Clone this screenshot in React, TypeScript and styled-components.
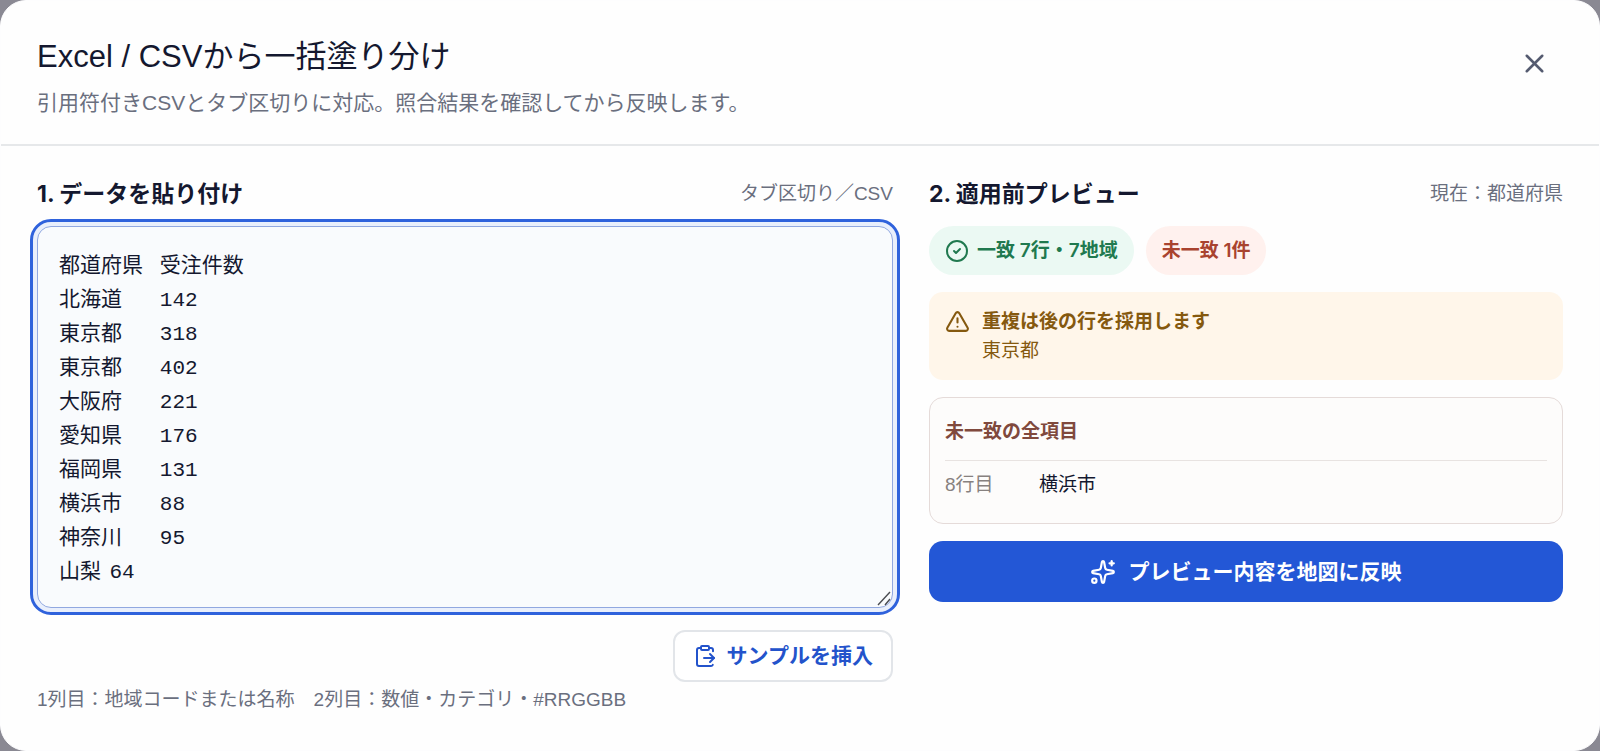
import React, { useState } from "react";
import styled, { createGlobalStyle } from "styled-components";
import { CircleCheck, ClipboardPaste, Sparkles, TriangleAlert, X } from "lucide-react";

const labelFont = 'Inter, "Noto Sans CJK JP", sans-serif';

const GlobalStyle = createGlobalStyle`
  *, *::before, *::after { box-sizing: border-box; }
  body {
    margin: 0;
    background: #8a8993;
    color: #14182f;
    font-family: "Liberation Sans", "Noto Sans CJK JP", sans-serif;
    font-size: 19px;
    line-height: 28px;
  }
  h2, h3, h4, p, ul { margin: 0; padding: 0; }
  button { font: inherit; cursor: pointer; }
`;

const Dialog = styled.section`
  display: flex;
  flex-direction: column;
  min-height: 100vh;
  border: 1px solid #fdfdfe;
  border-radius: 26px;
  background: #fefefe;
`;

const Header = styled.header`
  display: flex;
  align-items: flex-start;
  justify-content: space-between;
  gap: 24px;
  padding: 33px 36px 25px;
  border-bottom: 2px solid #e6e8ea;
`;

const Title = styled.h2`
  font-size: 31px;
  line-height: 46px;
  font-weight: 400;
`;

const Description = styled.p`
  margin-top: 7px;
  font-size: 21px;
  line-height: 32px;
  color: #6a6f7e;
`;

const CloseButton = styled.button`
  display: grid;
  place-items: center;
  width: 58px;
  height: 58px;
  padding: 0;
  border: 0;
  border-radius: 12px;
  background: transparent;
  color: #555b70;
`;

const Body = styled.div`
  display: grid;
  grid-template-columns: minmax(0, 27fr) minmax(0, 20fr);
  gap: 36px;
  align-items: start;
  padding: 33px 36px 36px;
`;

const InputColumn = styled.div`
  display: flex;
  flex-direction: column;
`;

const PreviewColumn = styled.div`
  display: flex;
  flex-direction: column;
  gap: 17px;
`;

const SectionHead = styled.div`
  display: flex;
  align-items: center;
  justify-content: space-between;
  gap: 16px;
`;

const SectionTitle = styled.h3`
  font-family: ${labelFont};
  font-size: 23px;
  line-height: 30px;
  font-weight: 700;
`;

const SectionHint = styled.span`
  color: #6a6f7e;
`;

const InputFrame = styled.div`
  position: relative;
  margin-top: 17px;
`;

const DataInput = styled.textarea`
  display: block;
  width: 100%;
  padding: 23px 21px 17px;
  border: 1px solid #91a8e0;
  border-radius: 14px;
  outline: 3px solid #2f62dc;
  outline-offset: 4px;
  box-shadow: 0 0 0 4px #e9effc;
  background: #f9fbfd;
  color: #14182f;
  font-family: "Liberation Mono", "Noto Sans CJK JP", monospace;
  font-size: 21px;
  line-height: 34px;
  tab-size: 4;
  resize: vertical;
  overflow: hidden;

  &::-webkit-resizer {
    background: transparent;
  }
`;

const ResizeGrip = styled.svg`
  position: absolute;
  right: 1px;
  bottom: 2px;
  pointer-events: none;
`;

const SampleButton = styled.button`
  display: flex;
  align-items: center;
  gap: 10px;
  align-self: flex-end;
  height: 52px;
  margin-top: 22px;
  padding: 0 18px;
  border: 2px solid #e2e5e9;
  border-radius: 12px;
  background: #ffffff;
  color: #2353cb;
  font-size: 21px;
  font-weight: 600;
`;

const Note = styled.p`
  margin-top: 4px;
  color: #6a6f7e;
`;

const Badges = styled.div`
  display: flex;
  flex-wrap: wrap;
  gap: 12px;
`;

const Badge = styled.span<{ $tone: "ok" | "error" }>`
  display: inline-flex;
  align-items: center;
  gap: 8px;
  height: 49px;
  padding: 0 16px;
  border-radius: 25px;
  font-family: ${labelFont};
  font-weight: 600;
  background: ${({ $tone }) => ($tone === "ok" ? "#ebf9f3" : "#fff1ee")};
  color: ${({ $tone }) => ($tone === "ok" ? "#20794f" : "#a9432f")};
`;

const Alert = styled.div`
  display: flex;
  gap: 12px;
  padding: 15px 16px;
  border-radius: 14px;
  background: #fff6ea;
  color: #85590f;
  line-height: 29px;
`;

const AlertIcon = styled(TriangleAlert)`
  flex: none;
  margin-top: 2px;
`;

const UnmatchedPanel = styled.div`
  padding: 16px 15px 20px;
  border: 1px solid #e5dbd9;
  border-radius: 14px;
  background: #fdfcfb;
`;

const UnmatchedTitle = styled.h4`
  padding: 4px 0 14px;
  border-bottom: 1px solid #e8e3e1;
  color: #80493d;
  font-size: 19px;
  font-weight: 700;
`;

const UnmatchedList = styled.ul`
  list-style: none;
`;

const UnmatchedRow = styled.li`
  display: grid;
  grid-template-columns: 78px 1fr;
  gap: 16px;
  padding: 10px 0 4px;
`;

const RowNumber = styled.span`
  color: #87817f;
`;

const ApplyButton = styled.button`
  display: flex;
  align-items: center;
  justify-content: center;
  gap: 12px;
  height: 61px;
  border: 0;
  border-radius: 14px;
  background: #2357d6;
  color: #ffffff;
  font-size: 21px;
  font-weight: 700;
`;

const rows = [
  ["都道府県", "受注件数"],
  ["北海道", "142"],
  ["東京都", "318"],
  ["東京都", "402"],
  ["大阪府", "221"],
  ["愛知県", "176"],
  ["福岡県", "131"],
  ["横浜市", "88"],
  ["神奈川", "95"],
  ["山梨", "64"],
];

const sample = rows.map((row) => row.join("\t")).join("\n");

const unmatched = [{ line: 8, name: "横浜市" }];

export default function App() {
  const [text, setText] = useState(sample);

  return (
    <>
      <GlobalStyle />
      <Dialog role="dialog" aria-labelledby="dialog-title">
        <Header>
          <div>
            <Title id="dialog-title">Excel / CSVから一括塗り分け</Title>
            <Description>引用符付きCSVとタブ区切りに対応。照合結果を確認してから反映します。</Description>
          </div>
          <CloseButton type="button" aria-label="閉じる">
            <X size={31} strokeWidth={2} />
          </CloseButton>
        </Header>
        <Body>
          <InputColumn>
            <SectionHead>
              <SectionTitle>
                <label htmlFor="data">1. データを貼り付け</label>
              </SectionTitle>
              <SectionHint>タブ区切り／CSV</SectionHint>
            </SectionHead>
            <InputFrame>
              <DataInput
                id="data"
                rows={10}
                spellCheck={false}
                value={text}
                onChange={(event) => setText(event.target.value)}
              />
              <ResizeGrip width={16} height={16} aria-hidden="true">
                <path d="M2 15 14 2M9 15l5-6" stroke="#4a4c52" strokeWidth="1.4" fill="none" />
              </ResizeGrip>
            </InputFrame>
            <SampleButton type="button" onClick={() => setText(sample)}>
              <ClipboardPaste size={24} />
              サンプルを挿入
            </SampleButton>
            <Note>1列目：地域コードまたは名称　2列目：数値・カテゴリ・#RRGGBB</Note>
          </InputColumn>
          <PreviewColumn>
            <SectionHead>
              <SectionTitle>2. 適用前プレビュー</SectionTitle>
              <SectionHint>現在：都道府県</SectionHint>
            </SectionHead>
            <Badges>
              <Badge $tone="ok">
                <CircleCheck size={24} />
                一致 7行・7地域
              </Badge>
              <Badge $tone="error">未一致 1件</Badge>
            </Badges>
            <Alert>
              <AlertIcon size={25} />
              <div>
                <strong>重複は後の行を採用します</strong>
                <p>東京都</p>
              </div>
            </Alert>
            <UnmatchedPanel>
              <UnmatchedTitle>未一致の全項目</UnmatchedTitle>
              <UnmatchedList>
                {unmatched.map((item) => (
                  <UnmatchedRow key={item.line}>
                    <RowNumber>{item.line}行目</RowNumber>
                    <span>{item.name}</span>
                  </UnmatchedRow>
                ))}
              </UnmatchedList>
            </UnmatchedPanel>
            <ApplyButton type="button">
              <Sparkles size={26} />
              プレビュー内容を地図に反映
            </ApplyButton>
          </PreviewColumn>
        </Body>
      </Dialog>
    </>
  );
}
